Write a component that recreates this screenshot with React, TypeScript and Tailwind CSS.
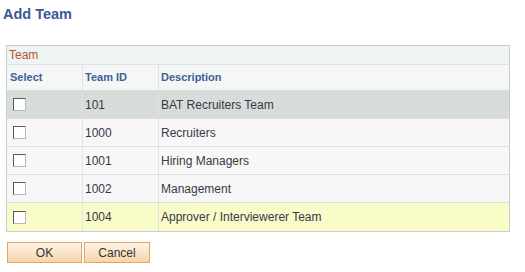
const rows = [
	{ id: "101", desc: "BAT Recruiters Team", bg: "bg-[#d6dcda]" },
	{ id: "1000", desc: "Recruiters", bg: "bg-[#f7f7f7]" },
	{ id: "1001", desc: "Hiring Managers", bg: "bg-[#f7f7f7]" },
	{ id: "1002", desc: "Management", bg: "bg-[#f7f7f7]" },
	{ id: "1004", desc: "Approver / Interviewerer Team", bg: "bg-[#f9fbc9]" },
];

function Checkbox() {
	return (
		<div className="h-[13px] w-[13px] border-t border-l border-t-[#5a5a5a] border-l-[#5a5a5a] border-r border-b border-r-[#b8b8b8] border-b-[#b8b8b8] bg-white" />
	);
}

export default function App() {
	return (
		<div className="h-[272px] w-[525px] bg-white font-['Liberation_Sans',Arial,sans-serif]">
			<h1 className="pt-[6px] pl-[3px] font-bold text-[14.5px] leading-[16px] text-[#3b5897]">
				Add Team
			</h1>

			<div className="mt-[23px] ml-[6px] w-[504px] border border-[#c9cdd0]">
				<div className="flex h-[19px] items-center border-b border-[#dfe3e5] bg-[#eef3f4] pl-[2px] text-[12px] text-[#b3562c]">
					Team
				</div>
				<div className="grid h-[26px] grid-cols-[76px_76px_1fr] border-b border-[#dcdcdc] bg-[#f5f6f6] font-bold text-[11px] text-[#3e5f98]">
					<div className="flex items-center border-r border-[#e2e2e2] pl-[3px]">Select</div>
					<div className="flex items-center border-r border-[#e2e2e2] pl-[2px]">Team ID</div>
					<div className="flex items-center pl-[2px]">Description</div>
				</div>
				{rows.map((row, i) => (
					<div
						key={row.id}
						className={`grid h-[28px] grid-cols-[76px_76px_1fr] text-[12px] text-[#3a3848] ${row.bg} ${
							i < rows.length - 1 ? "border-b border-[#dedede]" : ""
						}`}
					>
						<div className="flex items-center border-r border-[#e2e2e2] pl-[6px]">
							<Checkbox />
						</div>
						<div className="flex items-center border-r border-[#e2e2e2] pl-[2px]">{row.id}</div>
						<div className="flex items-center pl-[2px]">{row.desc}</div>
					</div>
				))}
			</div>

			<div className="mt-[10px] ml-[7px] flex gap-[2px]">
				<button
					type="button"
					className="h-[21px] w-[75px] border border-[#e3a466] bg-gradient-to-b from-[#fdf3e6] to-[#f7d5ab] text-[12px] text-[#333]"
				>
					OK
				</button>
				<button
					type="button"
					className="h-[21px] w-[66px] border border-[#e3a466] bg-gradient-to-b from-[#fdf3e6] to-[#f7d5ab] text-[12px] text-[#333]"
				>
					Cancel
				</button>
			</div>
		</div>
	);
}
